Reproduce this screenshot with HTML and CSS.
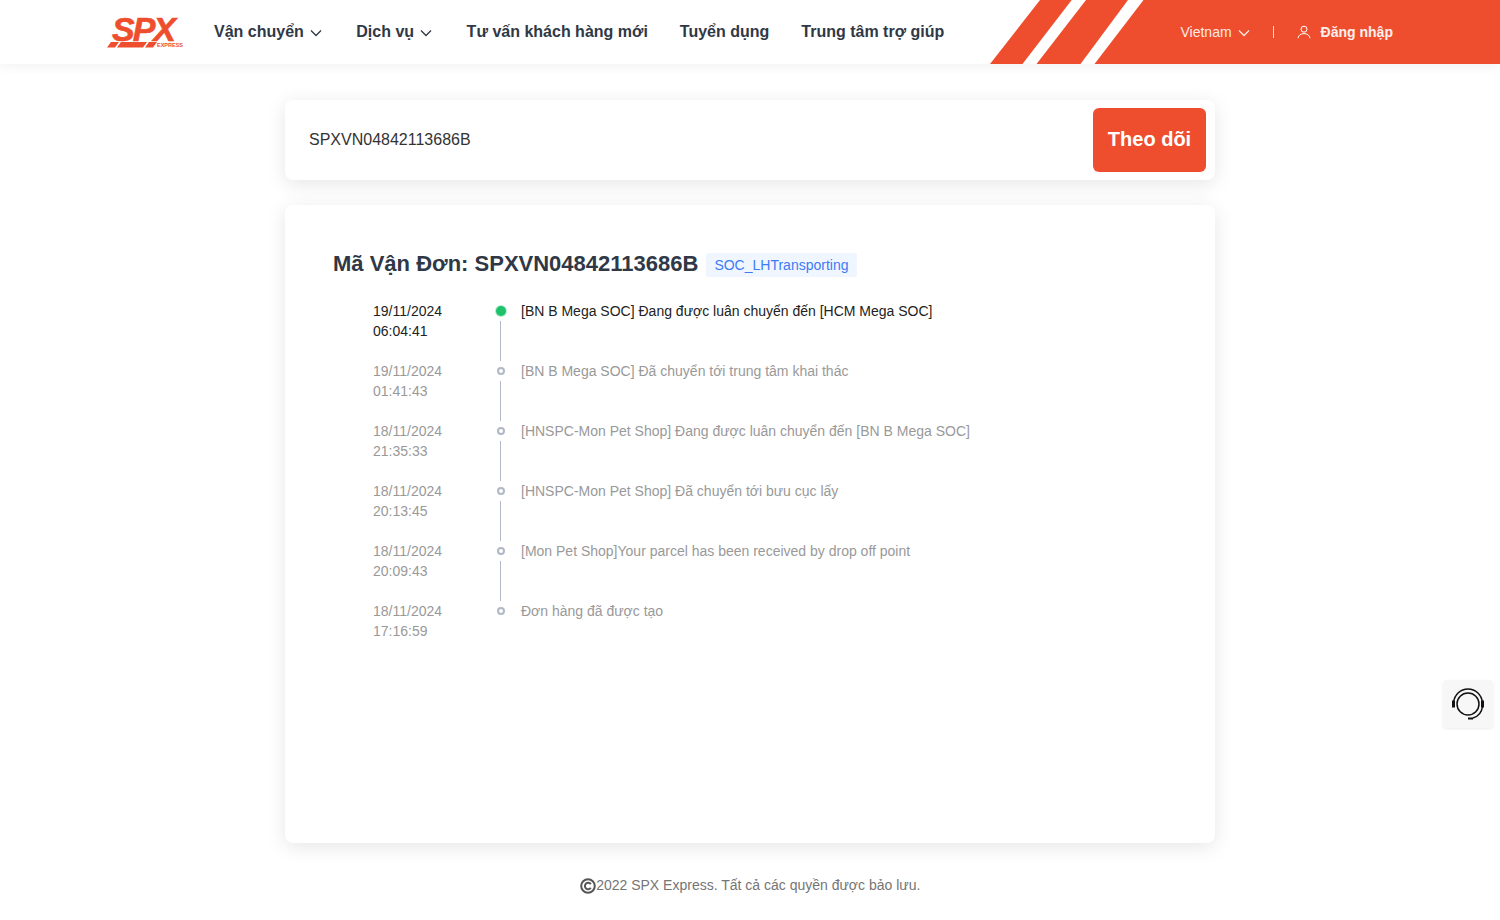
FILE: index.html
```html
<!DOCTYPE html>
<html lang="vi">
<head>
  <meta charset="UTF-8">
  <title>SPX Express</title>
  <meta name="viewport" content="width=device-width, initial-scale=1.0">
  <link rel="stylesheet" href="styles.css">
</head>
<body>
  <header class="topbar">
    <a class="logo" href="#">
      <span class="logo-spx">SPX</span>
      <svg class="logo-bars" viewBox="0 0 50 6" aria-hidden="true">
        <polygon points="4,0 12,0 8,5.500 0,5.500" />
        <polygon points="14,0 40,0 36,5.500 10,5.500" />
        <polygon points="42,0 50,0 46,5.500 38,5.500" />
      </svg>
      <span class="logo-express">EXPRESS</span>
    </a>
    <nav class="nav">
      <a href="#">Vận chuyển
        <svg class="chev" viewBox="0 0 12 8"><path d="M1 1.500l5 5 5-5" /></svg>
      </a>
      <a href="#">Dịch vụ
        <svg class="chev" viewBox="0 0 12 8"><path d="M1 1.500l5 5 5-5" /></svg>
      </a>
      <a href="#">Tư vấn khách hàng mới</a>
      <a href="#">Tuyển dụng</a>
      <a href="#">Trung tâm trợ giúp</a>
    </nav>
    <div class="topbar-right">
      <svg class="stripes" viewBox="0 0 510 64" aria-hidden="true">
        <polygon points="0,64 50,0 81.7,0 32.5,64" />
        <polygon points="46.5,64 96,0 138,0 90.5,64" />
        <polygon points="104.500,64 153.500,0 510,0 510,64" />
      </svg>
      <a class="lang" href="#">Vietnam
        <svg class="chev" viewBox="0 0 12 8"><path d="M1 1.500l5 5 5-5" /></svg>
      </a>
      <span class="sep"></span>
      <a class="login" href="#">
        <svg class="user" viewBox="0 0 14 14"><circle cx="7" cy="4.200" r="3" /><path d="M1 13.200c.4-3 2.800-4.600 6-4.600s5.600 1.600 6 4.600" /></svg>
        Đăng nhập
      </a>
    </div>
  </header>

  <main class="content">
    <section class="card search">
      <input class="search-input" value="SPXVN04842113686B">
      <button class="track-btn">Theo dõi</button>
    </section>

    <section class="card result">
      <div class="result-head">
        <h1>Mã Vận Đơn: SPXVN04842113686B</h1>
        <span class="tag">SOC_LHTransporting</span>
      </div>
      <ul class="timeline">
        <li class="step current">
          <div class="time">19/11/2024<br>06:04:41</div>
          <div class="mark"><i></i></div>
          <div class="msg">[BN B Mega SOC] Đang được luân chuyển đến [HCM Mega SOC]</div>
        </li>
        <li class="step">
          <div class="time">19/11/2024<br>01:41:43</div>
          <div class="mark"><i></i></div>
          <div class="msg">[BN B Mega SOC] Đã chuyển tới trung tâm khai thác</div>
        </li>
        <li class="step">
          <div class="time">18/11/2024<br>21:35:33</div>
          <div class="mark"><i></i></div>
          <div class="msg">[HNSPC-Mon Pet Shop] Đang được luân chuyển đến [BN B Mega SOC]</div>
        </li>
        <li class="step">
          <div class="time">18/11/2024<br>20:13:45</div>
          <div class="mark"><i></i></div>
          <div class="msg">[HNSPC-Mon Pet Shop] Đã chuyển tới bưu cục lấy</div>
        </li>
        <li class="step">
          <div class="time">18/11/2024<br>20:09:43</div>
          <div class="mark"><i></i></div>
          <div class="msg">[Mon Pet Shop]Your parcel has been received by drop off point</div>
        </li>
        <li class="step last">
          <div class="time">18/11/2024<br>17:16:59</div>
          <div class="mark"><i></i></div>
          <div class="msg">Đơn hàng đã được tạo</div>
        </li>
      </ul>
    </section>
  </main>

  <footer class="footer">
    <svg class="copy" viewBox="0 0 16 16"><circle cx="8" cy="8" r="6.800" /><path d="M10.800 6.200a3.200 3.200 0 1 0 0 3.600" /></svg>2022 SPX Express. Tất cả các quyền được bảo lưu.
  </footer>

  <a class="help" href="#">
    <svg viewBox="0 0 34 34" aria-hidden="true">
      <circle class="help-inner" cx="17" cy="17" r="11" />
      <path class="help-outer" d="M2.500 15.500C3.500 7.500 9.500 2 17 2s13.500 5.500 14.500 13.500v4c-.8 6-4.500 10-9.500 11.500" />
      <path class="help-ear" d="M2.500 13.500v7M31.500 13.500v7" />
      <path class="help-mic" d="M17 31.500h5" />
    </svg>
  </a>
</body>
</html>
```

FILE: styles.css
```css
* { box-sizing: border-box; }
html, body { margin: 0; height: 100%; }
body { font-family: "Liberation Sans", Arial, sans-serif; background: #fff; color: #333; height: 920px; overflow: hidden; }
a { color: inherit; text-decoration: none; }

.topbar { display: flex; align-items: center; height: 64px; padding-left: 107px; background: #fff; box-shadow: 0 2px 12px rgba(0, 0, 0, 0.06); position: relative; }
.logo { display: block; position: relative; width: 76px; height: 32px; margin-top: -1px; color: #ee4d2d; }
.logo-spx { position: absolute; left: 5px; top: 0; height: 26px; font-size: 34px; line-height: 26px; font-weight: 700; font-style: italic; letter-spacing: -2px; color: #ee4e2d; -webkit-text-stroke: 0.6px #ee4e2d; }
.logo-bars { position: absolute; left: 0; bottom: 0; width: 50px; height: 6px; fill: #ee4e2d; }
.logo-express { position: absolute; right: 0; bottom: 0; font-size: 5.500px; line-height: 6px; font-weight: 700; color: #ee4e2d; }

.nav { display: flex; gap: 32px; margin-left: 31px; font-size: 16px; font-weight: 700; color: #303846; margin-top: -1px; }
.nav a { display: flex; align-items: center; gap: 6px; white-space: nowrap; }
.nav .chev { margin-right: 2.500px; }
.chev { width: 12px; height: 8px; fill: none; stroke: currentColor; stroke-width: 1.300; margin-top: 2px; }

.topbar-right { position: absolute; right: 0; top: 0; width: 510px; height: 64px; display: flex; align-items: center; padding-left: 190.500px; color: #fff; font-size: 14px; }
.stripes { position: absolute; left: 0; top: 0; width: 510px; height: 64px; fill: #ee4e2d; }
.lang, .login, .sep { position: relative; }
.lang { display: flex; align-items: center; gap: 6px; color: #ffe9e3; }
.sep { width: 1px; height: 12px; background: #ffd9cf; margin: 0 23px; }
.login { display: flex; align-items: center; gap: 10px; font-weight: 700; color: #fff0ec; }
.user { width: 14px; height: 14px; fill: none; stroke: #fff; stroke-width: 1; }

.content { width: 930px; margin: 36px auto 0; }
.card { background: #fff; border-radius: 8px; box-shadow: 0 4px 20px rgba(0, 0, 0, 0.1); }
.search { display: flex; align-items: center; justify-content: space-between; height: 80px; padding: 0 9px 0 24px; }
.search-input { flex: 1; border: 0; outline: 0; padding: 0; font: 16px "Liberation Sans", Arial, sans-serif; color: #333; }
.track-btn { width: 113px; height: 64px; padding: 0 0 2px; border: 0; border-radius: 6px; background: #ee4e2d; color: #fff; font: 700 20px "Liberation Sans", Arial, sans-serif; }

.result { height: 638px; margin-top: 25px; padding: 44px 48px 0; }
.result-head { display: flex; align-items: center; gap: 8px; height: 30px; }
.result-head h1 { margin: 0; font-size: 22px; font-weight: 700; line-height: 30px; color: #303846; }
.tag { width: 151px; height: 24px; margin-top: 2px; padding-left: 8px; background: #f0f6ff; color: #3d7bf5; font-size: 14px; line-height: 24px; border-radius: 2px; }

.timeline { list-style: none; margin: 22px 0 0; padding: 0 0 0 40px; }
.step { display: flex; height: 60px; font-size: 14px; line-height: 20px; color: #999; }
.time { width: 118px; }
.mark { position: relative; width: 20px; margin-right: 10px; }
.mark i { display: block; width: 8px; height: 8px; margin: 6px 0 0 6px; border: 2px solid #b0b8c6; border-radius: 50%; background: #fff; }
.mark::after { content: ""; position: absolute; left: 8.500px; top: 20px; width: 1px; height: 40px; background: #b4bbc8; }
.last .mark::after { display: none; }
.msg { white-space: nowrap; }
.current { color: #222; }
.current .mark i { width: 10px; height: 10px; margin: 5px 0 0 5px; border: 0; background: #1fc16b; box-shadow: 0 0 0 1px #b7ecd0; }

.footer { display: flex; justify-content: center; align-items: center; margin-top: 32px; font-size: 14px; line-height: 20px; color: #757575; }
.copy { width: 16px; height: 16px; margin-top: 1px; margin-right: 0.500px; fill: none; stroke: #555; stroke-width: 2; }

.help { position: fixed; left: 1443px; top: 680px; width: 50px; height: 48px; display: flex; align-items: center; justify-content: center; background: #f7f7f7; border-radius: 4px; box-shadow: 0 1px 3px rgba(0, 0, 0, 0.08); }
.help svg { width: 34px; height: 34px; fill: none; stroke: #111; stroke-width: 1.500; }
.help .help-ear { stroke-width: 3; }
.help .help-mic { stroke-width: 2; }
```
